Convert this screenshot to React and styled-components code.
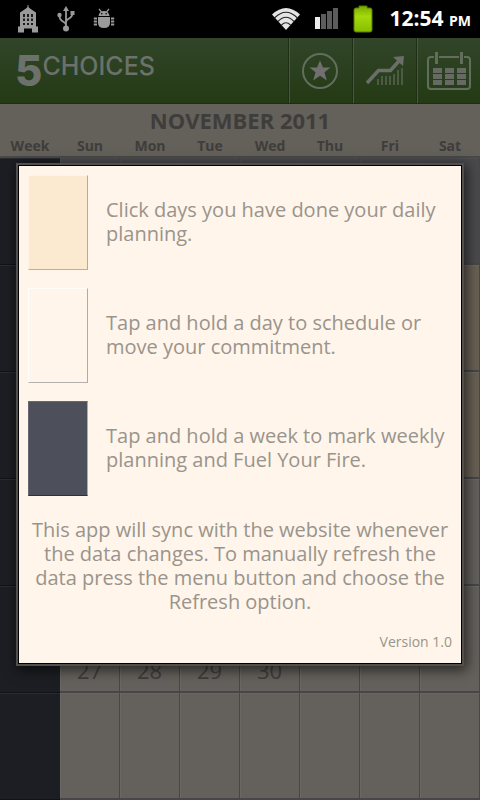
// App.jsx
import React from 'react';
import styled, { createGlobalStyle } from 'styled-components';

const weekdays = ['Week', 'Sun', 'Mon', 'Tue', 'Wed', 'Thu', 'Fri', 'Sat'];

const empty = ['', '', '', '', '', '', ''];

const weeks = [
  { id: 1, tone: 'past', days: empty },
  { id: 2, tone: 'planned', days: empty },
  { id: 3, tone: 'planned', days: empty },
  { id: 4, tone: 'plain', days: empty },
  { id: 5, tone: 'plain', days: ['27', '28', '29', '30', '', '', ''] },
  { id: 6, tone: 'plain', days: empty },
];

const tips = [
  { tone: 'planned', text: 'Click days you have done your daily planning.' },
  { tone: 'day', text: 'Tap and hold a day to schedule or move your commitment.' },
  { tone: 'week', text: 'Tap and hold a week to mark weekly planning and Fuel Your Fire.' },
];

function StatusIcons() {
  return (
    <IconGroup>
      <svg width="22" height="28" viewBox="0 0 22 28" fill="#9a9a9a">
        <path d="M10.500 0h1v2l1.500 1.500 6 4v14h2v6h-6v-4h-8v4H1v-6h2V7.500l6-4 1.500-1.500z" />
        <path d="M6 9h2v3H6zM10 9h2v3h-2zM14 9h2v3h-2zM6 13.500h2V16H6zM10 13.500h2V16h-2zM14 13.500h2V16h-2zM6 18h2v2H6zM10 18h2v2h-2zM14 18h2v2h-2z" fill="#1c1c1c" />
      </svg>
      <svg width="18" height="26" viewBox="0 0 18 26" fill="none" stroke="#9a9a9a" strokeWidth="1.800">
        <path d="M9 21V3M9 19c0-4-6.500-2.500-6.500-9M9 16c0-4 6.500-2.500 6.500-9" />
        <circle cx="9" cy="22.500" r="3" fill="#9a9a9a" stroke="none" />
        <circle cx="2.500" cy="9" r="2.200" fill="#9a9a9a" stroke="none" />
        <path d="M9 0l3 5H6zM13.500 5h4v4h-4z" fill="#9a9a9a" stroke="none" />
      </svg>
      <svg width="22" height="22" viewBox="0 0 22 22" fill="#9a9a9a">
        <path d="M5.500 8C6 4.500 8 3 11 3s5 1.500 5.500 5zM5 9h12v6q0 5-6 5t-6-5z" />
        <path d="M6 1l2.500 3M16 1l-2.500 3" stroke="#9a9a9a" strokeWidth="1.200" />
        <path d="M4 10.500H.800M4 13.500H.800M4 16.500H.800M18 10.500h3.200M18 13.500h3.200M18 16.500h3.200" stroke="#9a9a9a" strokeWidth="1.800" />
        <circle cx="8.800" cy="5.800" r=".8" fill="#000" />
        <circle cx="13.200" cy="5.800" r=".8" fill="#000" />
      </svg>
    </IconGroup>
  );
}

function SignalIcons() {
  return (
    <IconGroup>
      <svg width="30" height="24" viewBox="0 0 30 24">
        <path d="M1 7.500Q15-5.500 29 7.500L15 23z" fill="#e4e4e4" />
        <g fill="none" stroke="#222" strokeWidth="1.100">
          <path d="M3.500 11Q15-.5 26.500 11M7 14.500Q15 6 23 14.500M10.500 18Q15 13.500 19.500 18" />
        </g>
      </svg>
      <svg width="24" height="22" viewBox="0 0 24 22">
        <path d="M0 9h5v12H0z" fill="#ededed" />
        <path d="M6 6h5v15H6zM12 3h5v18h-5zM18 0h5v21h-5z" fill="#5c5c5c" />
      </svg>
      <svg width="20" height="28" viewBox="0 0 20 28">
        <defs>
          <linearGradient id="charge" x1="0" x2="0" y1="0" y2="1">
            <stop offset="0" stopColor="#78a800" />
            <stop offset="0.400" stopColor="#a4da0c" />
            <stop offset="1" stopColor="#86bd00" />
          </linearGradient>
        </defs>
        <path d="M6 1h8v2h3q2 0 2 2v20q0 2-2 2H3q-2 0-2-2V5q0-2 2-2h3z" fill="url(#charge)" stroke="#567d00" />
      </svg>
    </IconGroup>
  );
}

function StarIcon() {
  return (
    <svg width="38" height="38" viewBox="0 0 38 38">
      <circle cx="18" cy="19" r="17" fill="none" stroke="#626e5c" strokeWidth="2" />
      <path d="M18 8.500l3 7h7.500l-6 4.800 2.300 8.200-6.800-4.800-6.800 4.800 2.300-8.200-6-4.800H15z" fill="#716f70" />
    </svg>
  );
}

function ChartIcon() {
  return (
    <svg width="40" height="38" viewBox="0 0 40 38">
      <path d="M2 31l11.500-12.500h12L34 9" fill="none" stroke="#6c6f69" strokeWidth="3.500" />
      <path d="M28 5l11-1-1 10z" fill="#6c6f69" />
      <path d="M13 27v6M17 24v9M21 24v9M25 24v9M29 22v11M33 18v15M37 16v17" stroke="#586550" strokeWidth="1.500" />
    </svg>
  );
}

function CalendarIcon() {
  return (
    <svg width="44" height="40" viewBox="0 0 44 40">
      <path d="M7 6H4Q1 6 1 9v26q0 3 3 3h36q3 0 3-3V9q0-3-3-3h-3M12 6h20" fill="none" stroke="#626e5c" strokeWidth="2" />
      <path d="M8 1h3v12H8zM33 1h3v12h-3z" fill="#626e5c" />
      <path d="M6 17h9v5H6zM18 17h9v5h-9zM30 17h9v5h-9zM6 23h9v5H6zM18 23h9v5h-9zM30 23h9v5h-9zM6 29h9v5H6zM18 29h9v5h-9zM30 29h9v5h-9z" fill="#666a63" />
    </svg>
  );
}

function App() {
  return (
    <>
      <GlobalStyle />
      <Page>
        <StatusBar>
          <StatusIcons />
          <StatusRight>
            <SignalIcons />
            <Clock>
              12:54 <small>PM</small>
            </Clock>
          </StatusRight>
        </StatusBar>

        <Header>
          <Logo>
            <b>5</b>
            <span>CHOICES</span>
          </Logo>
          <NavButton aria-label="Choices"><StarIcon /></NavButton>
          <NavButton aria-label="Progress"><ChartIcon /></NavButton>
          <NavButton aria-label="Calendar"><CalendarIcon /></NavButton>
        </Header>

        <Calendar>
          <caption>NOVEMBER 2011</caption>
          <thead>
            <tr>
              {weekdays.map((name) => (
                <Weekday key={name} scope="col">{name}</Weekday>
              ))}
            </tr>
          </thead>
          <tbody>
            {weeks.map((week) => (
              <tr key={week.id}>
                <WeekCell />
                {week.days.map((day, index) => (
                  <DayCell key={index} $tone={week.tone}>{day}</DayCell>
                ))}
              </tr>
            ))}
          </tbody>
        </Calendar>

        <Overlay>
          <Dialog role="dialog" aria-modal="true">
            <TipList>
              {tips.map((tip) => (
                <Tip key={tip.tone}>
                  <Swatch $tone={tip.tone} />
                  <p>{tip.text}</p>
                </Tip>
              ))}
            </TipList>
            <SyncNote>
              This app will sync with the website whenever the data changes. To manually refresh
              the data press the menu button and choose the Refresh option.
            </SyncNote>
            <Version>Version 1.0</Version>
          </Dialog>
        </Overlay>
      </Page>
    </>
  );
}

const GlobalStyle = createGlobalStyle`
  * {
    box-sizing: border-box;
  }

  body {
    margin: 0;
    background: #000;
    font-family: 'Open Sans', 'Noto Sans', sans-serif;
  }

  p {
    margin: 0;
  }

  svg {
    display: block;
    flex: none;
  }
`;

const Page = styled.div`
  position: relative;
  min-height: 100vh;
`;

const StatusBar = styled.div`
  display: flex;
  justify-content: space-between;
  align-items: center;
  height: 38px;
  padding: 0 9px 0 17px;
  background: #000;
`;

const IconGroup = styled.div`
  display: flex;
  align-items: center;
  gap: 18px;
`;

const StatusRight = styled.div`
  display: flex;
  align-items: center;
  gap: 17px;

  /* the indicators on the right sit closer together */
  ${IconGroup} {
    gap: 14px;
  }
`;

const Clock = styled.div`
  color: #fff;
  font-size: 21px;
  font-weight: 700;
  line-height: 38px;
  white-space: nowrap;

  small {
    font-size: 14px;
  }
`;

const Header = styled.header`
  display: flex;
  height: 66px;
  background: linear-gradient(#314529, #243a14);
  border-bottom: 1px solid #202c18;
`;

const Logo = styled.div`
  display: flex;
  flex: 1;
  align-items: flex-start;
  padding-left: 15px;
  color: #6c716b;
  font-family: Inter, sans-serif;

  b {
    padding-top: 12px;
    font-size: 42px;
    font-weight: 800;
    line-height: 42px;
  }

  span {
    padding-top: 16px;
    font-size: 25px;
    font-weight: 500;
    line-height: 25px;
  }
`;

const NavButton = styled.button`
  display: flex;
  justify-content: center;
  align-items: center;
  width: 64px;
  padding: 0;
  border: 0;
  border-left: 1px solid #1f2f15;
  box-shadow: inset 1px 0 #465a3c;
  background: none;
`;

const Calendar = styled.table`
  width: 100%;
  table-layout: fixed;
  border-spacing: 0;
  background: #64605a;
  color: #3f3d3b;

  caption {
    height: 34px;
    background: #64605a;
    font-size: 22px;
    font-weight: 700;
    line-height: 32px;
  }
`;

const Weekday = styled.th`
  height: 20px;
  padding: 0 0 2px;
  border-bottom: 2px solid #4a4947;
  font-size: 14px;
  font-weight: 700;
  line-height: 16px;

  &:first-child {
    width: 60px;
  }
`;

const WeekCell = styled.td`
  height: 107px;
  padding: 0;
  background: #1c1e23;
  border-top: 1px solid #2a2c30;
  border-bottom: 1px solid #101216;
`;

const dayTones = {
  past: '#4a494c',
  planned: '#696054',
  plain: '#64605b',
};

const DayCell = styled.td`
  height: 107px;
  padding: 0 0 6px;
  border-right: 1px solid #47474b;
  border-bottom: 2px solid #47474b;
  background: ${({ $tone }) => dayTones[$tone]};
  box-shadow: inset 1px 1px ${({ $tone }) => ($tone === 'past' ? '#505053' : '#6a6863')};
  color: #3f3d3b;
  font-size: 22px;
  line-height: 30px;
  text-align: center;
  vertical-align: bottom;
`;

const Overlay = styled.div`
  position: absolute;
  inset: 38px 0 0;
  display: flex;
  justify-content: center;
  align-items: center;
  padding: 0 16px 10px;
`;

const Dialog = styled.section`
  width: 100%;
  padding: 9px;
  border: 1px solid #000;
  outline: 2px solid #51504c;
  margin: 0 2px;
  background: #fff5ea;
  box-shadow: 2px 3px 12px 3px rgba(0, 0, 0, 0.6);
  color: #99948c;
  font-size: 20px;
  line-height: 24px;
`;

const TipList = styled.div`
  display: flex;
  flex-direction: column;
  gap: 18px;
`;

const Tip = styled.div`
  display: flex;
  align-items: center;
  gap: 18px;
`;

const swatchTones = {
  planned: { fill: '#fbe9d0', light: '#fff3e2', edge: '#b5b0ad' },
  day: { fill: '#fff5eb', light: '#fffefb', edge: '#b5b0b0' },
  week: { fill: '#4d4f5b', light: '#676873', edge: '#2d3040' },
};

const Swatch = styled.div`
  flex: none;
  width: 60px;
  height: 95px;
  border: 1px solid ${({ $tone }) => swatchTones[$tone].light};
  border-right-color: #b0abab;
  border-bottom-color: ${({ $tone }) => swatchTones[$tone].edge};
  background: ${({ $tone }) => swatchTones[$tone].fill};
`;

const SyncNote = styled.p`
  margin-top: 22px;
  text-align: center;
`;

const Version = styled.p`
  margin-top: 16px;
  font-size: 14px;
  text-align: right;
`;

export default App;
